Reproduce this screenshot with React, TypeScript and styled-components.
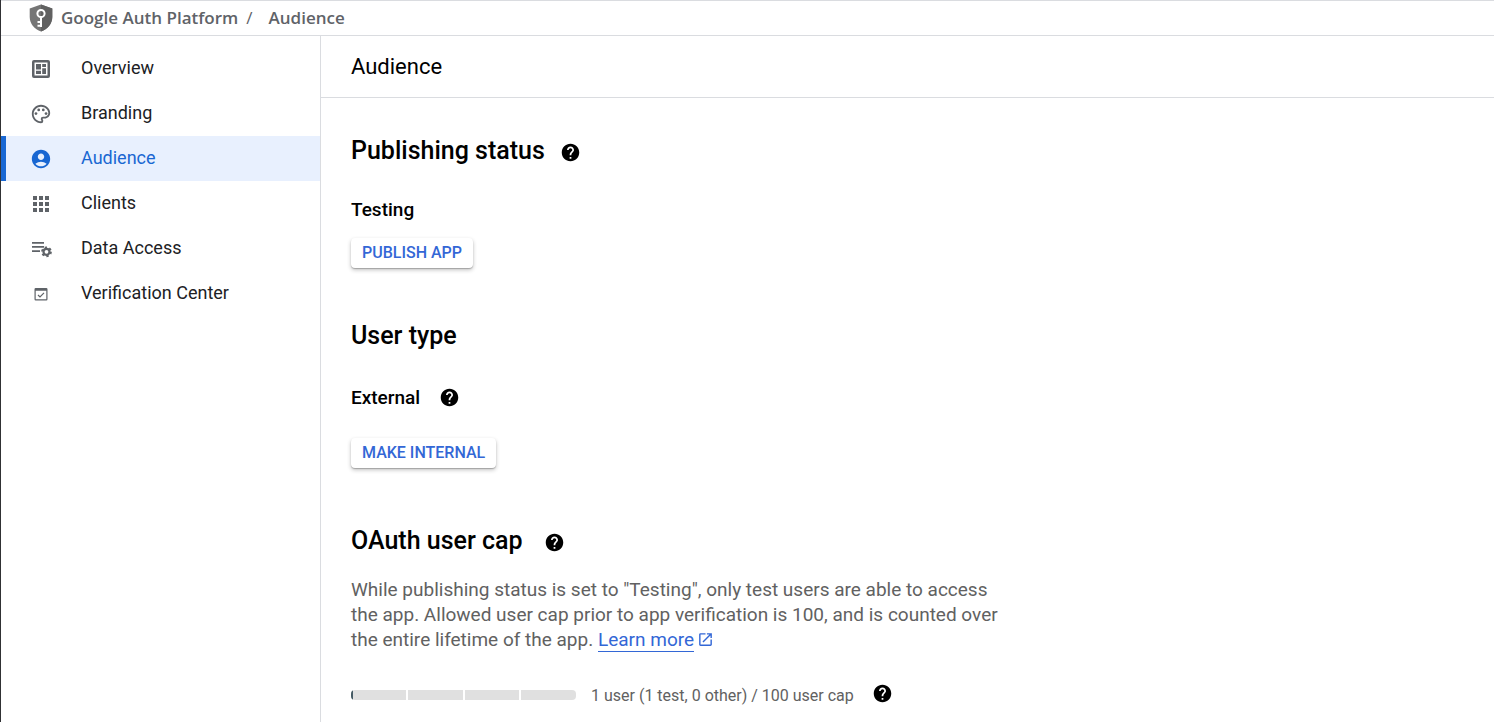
import React from "react";
import styled, { createGlobalStyle } from "styled-components";
import { MdAccountCircle, MdApps, MdHelp, MdOpenInNew, MdOutlinePalette } from "react-icons/md";

const GlobalStyle = createGlobalStyle`
  *, *::before, *::after { box-sizing: border-box; }
  body {
    margin: 0;
    background: #fff;
    color: #000;
    font-family: Roboto, "Liberation Sans", sans-serif;
  }
  h1, h2, h3, p, ul { margin: 0; padding: 0; }
`;

const Shell = styled.div`
  display: flex;
  flex-direction: column;
  min-height: 100vh;
  border-left: 1px solid #303134;
`;

const TopBar = styled.header`
  display: flex;
  align-items: center;
  height: 36px;
  padding-left: 28px;
  border-top: 1px solid #dadce0;
  border-bottom: 1px solid #dadce0;
`;

const Crumbs = styled.nav`
  display: flex;
  align-items: center;
  margin-left: 8px;
  font-family: "Open Sans", Roboto, sans-serif;
  font-size: 17px;
  font-weight: 600;
  line-height: 24px;
  color: #5f6368;
`;

const Crumb = styled.a`
  color: inherit;
  text-decoration: none;
`;

const Slash = styled.span`
  margin: 0 16px 0 8px;
  font-weight: 400;
`;

const Body = styled.div`
  display: flex;
  flex: 1;
`;

const Sidebar = styled.nav`
  flex: 0 0 320px;
  padding-top: 10px;
  border-right: 1px solid #dadce0;
`;

const NavList = styled.ul`
  list-style: none;
`;

const NavLink = styled.a<{ $active?: boolean }>`
  display: flex;
  align-items: center;
  gap: 28px;
  height: 45px;
  padding-left: 23px;
  border-left: 5px solid ${(p) => (p.$active ? "#1967d2" : "transparent")};
  background: ${(p) => (p.$active ? "#e8f0fe" : "transparent")};
  color: ${(p) => (p.$active ? "#1967d2" : "#202124")};
  font-size: 18px;
  line-height: 24px;
  text-decoration: none;
`;

const NavIcon = styled.span<{ $active?: boolean }>`
  display: flex;
  align-items: center;
  justify-content: center;
  width: 24px;
  height: 24px;
  color: ${(p) => (p.$active ? "#1967d2" : "#5f6368")};
`;

const NavText = styled.span`
  padding-bottom: 1px;
`;

const Main = styled.main`
  flex: 1;
  min-width: 0;
`;

const TitleBar = styled.div`
  height: 62px;
  padding: 16px 30px;
  border-bottom: 1px solid #dadce0;
`;

const Title = styled.h1`
  font-size: 22px;
  font-weight: 400;
  line-height: 30px;
`;

const Content = styled.div`
  padding: 38px 30px 12px;
`;

const Section = styled.section<{ $bottom?: number }>`
  display: flex;
  flex-direction: column;
  align-items: flex-start;
  margin-bottom: ${(p) => p.$bottom ?? 0}px;
`;

const HeadingRow = styled.div<{ $gap: number }>`
  display: flex;
  align-items: center;
  gap: ${(p) => p.$gap}px;
`;

const Heading = styled.h2`
  font-size: 25px;
  font-weight: 500;
  line-height: 30px;
`;

const Status = styled.h3`
  font-size: 19px;
  font-weight: 500;
  line-height: 20px;
`;

const StatusRow = styled.div<{ $top: number; $bottom: number }>`
  display: flex;
  align-items: center;
  gap: 19px;
  margin: ${(p) => p.$top}px 0 ${(p) => p.$bottom}px;
`;

const HelpButton = styled.button<{ $drop?: number; $lift?: number }>`
  display: flex;
  margin: 0;
  padding: ${(p) => p.$drop ?? 0}px 0 ${(p) => p.$lift ?? 0}px;
  border: 0;
  background: none;
  color: #000;
  cursor: pointer;
`;

const RaisedButton = styled.button`
  height: 30px;
  padding: 0 11px;
  border: 0;
  border-radius: 4px;
  background: #fff;
  box-shadow: 0 1px 1px rgba(0, 0, 0, 0.22), 0 2px 4px rgba(0, 0, 0, 0.24);
  color: #3367d6;
  font-family: inherit;
  font-size: 16px;
  font-weight: 500;
  line-height: 20px;
  cursor: pointer;
`;

const Description = styled.p`
  max-width: 650px;
  margin-top: 21px;
  color: #616161;
  font-size: 19px;
  line-height: 25px;

  svg {
    margin-left: 3px;
    color: #3367d6;
    vertical-align: -2px;
  }
`;

const LearnMore = styled.a`
  display: inline-block;
  border-bottom: 1px solid #3367d6;
  color: #3367d6;
  line-height: 22px;
  text-decoration: none;
`;

const CapRow = styled.div`
  display: flex;
  align-items: center;
  margin-top: 31px;
`;

const Meter = styled.div`
  display: grid;
  grid-template-columns: repeat(4, 1fr);
  gap: 2px;
  width: 225px;
  height: 10px;
  border-radius: 4px;
  overflow: hidden;
`;

const Quarter = styled.div`
  background: #e0e0e0;
`;

const Used = styled.div`
  width: 2px;
  height: 100%;
  background: #455a64;
`;

const CapText = styled.span`
  margin: 1px 18px 0 15px;
  color: #616161;
  font-size: 16px;
  line-height: 20px;
`;

const ShieldLogo = () => (
  <svg width="24" height="28" viewBox="0 0 24 28" aria-hidden="true">
    <path d="M12 0.5 23.3 4.6V13c0 6.600-4.800 12.300-11.300 14.500C5.500 25.300.700 19.600.700 13V4.600z" fill="#757575" />
    <path d="M12 .5 23.300 4.600V13c0 6.600-4.800 12.300-11.300 14.500z" fill="#616161" />
    <circle cx="12" cy="9.500" r="3.600" fill="none" stroke="#fff" strokeWidth="2" />
    <path d="M11 13h2v10h-2zM8.500 17h3v2h-3zM8.500 20.800h3v2h-3z" fill="#fff" />
  </svg>
);

const OverviewIcon = () => (
  <svg width="18" height="18" viewBox="0 0 18 18" aria-hidden="true">
    <path
      fill="currentColor"
      fillRule="evenodd"
      d="M2 0h14a2 2 0 0 1 2 2v14a2 2 0 0 1-2 2H2a2 2 0 0 1-2-2V2a2 2 0 0 1 2-2zM2.500 2.500v13h13v-13z"
    />
    <path fill="currentColor" d="M4 4h5v5.500H4zM10.200 4H14v3h-3.800zM4 10.700h5V14H4zM10.200 8.200H14V14h-3.800z" />
  </svg>
);

const DataAccessIcon = () => (
  <svg width="22" height="18" viewBox="-2 0 22 18" aria-hidden="true">
    <path fill="currentColor" d="M0 2h12v1.700H0zM0 6h12v1.700H0zM0 10.300h8V12H0z" />
    <g fill="none" stroke="currentColor">
      <circle cx="14.500" cy="11.800" r="3" strokeWidth="2.200" />
      <circle cx="14.500" cy="11.800" r="4.500" strokeWidth="1.800" strokeDasharray="2.300 2.412" />
    </g>
  </svg>
);

const VerificationIcon = () => (
  <svg width="14" height="14" viewBox="0 0 14 14" aria-hidden="true">
    <path
      fill="currentColor"
      fillRule="evenodd"
      d="M1.700 1h10.600A1.200 1.200 0 0 1 13.500 2.200v10.100a1.200 1.200 0 0 1-1.200 1.200H1.700A1.200 1.200 0 0 1 .5 12.300V2.200A1.200 1.200 0 0 1 1.700 1zM1.700 3.700v8.600h10.600V3.700z"
    />
    <path fill="none" stroke="currentColor" strokeWidth="1.200" d="M4 8 6 10 10 5.900" />
  </svg>
);

const navItems = [
  { label: "Overview", icon: <OverviewIcon /> },
  { label: "Branding", icon: <MdOutlinePalette size={22} /> },
  { label: "Audience", icon: <MdAccountCircle size={22} />, active: true },
  { label: "Clients", icon: <MdApps size={24} /> },
  { label: "Data Access", icon: <DataAccessIcon /> },
  { label: "Verification Center", icon: <VerificationIcon /> },
];

const Help = ({ topic, drop, lift }: { topic: string; drop?: number; lift?: number }) => (
  <HelpButton type="button" aria-label={`Help: ${topic}`} $drop={drop} $lift={lift}>
    <MdHelp size={21} />
  </HelpButton>
);

export default function App() {
  return (
    <>
      <GlobalStyle />
      <Shell>
        <TopBar>
          <ShieldLogo />
          <Crumbs aria-label="Breadcrumb">
            <Crumb href="#platform">Google Auth Platform</Crumb>
            <Slash>/</Slash>
            <Crumb href="#audience">Audience</Crumb>
          </Crumbs>
        </TopBar>
        <Body>
          <Sidebar aria-label="Sections">
            <NavList>
              {navItems.map((item) => (
                <li key={item.label}>
                  <NavLink href="#section" $active={item.active} aria-current={item.active ? "page" : undefined}>
                    <NavIcon $active={item.active}>{item.icon}</NavIcon>
                    <NavText>{item.label}</NavText>
                  </NavLink>
                </li>
              ))}
            </NavList>
          </Sidebar>
          <Main>
            <TitleBar>
              <Title>Audience</Title>
            </TitleBar>
            <Content>
              <Section $bottom={53}>
                <HeadingRow $gap={15}>
                  <Heading>Publishing status</Heading>
                  <Help topic="publishing status" drop={3} />
                </HeadingRow>
                <StatusRow $top={34} $bottom={18}>
                  <Status>Testing</Status>
                </StatusRow>
                <RaisedButton type="button">PUBLISH APP</RaisedButton>
              </Section>
              <Section $bottom={58}>
                <HeadingRow $gap={15}>
                  <Heading>User type</Heading>
                </HeadingRow>
                <StatusRow $top={36} $bottom={30}>
                  <Status>External</Status>
                  <Help topic="user type" />
                </StatusRow>
                <RaisedButton type="button">MAKE INTERNAL</RaisedButton>
              </Section>
              <Section>
                <HeadingRow $gap={21}>
                  <Heading>OAuth user cap</Heading>
                  <Help topic="OAuth user cap" drop={3} />
                </HeadingRow>
                <Description>
                  While publishing status is set to "Testing", only test users are able to access the app. Allowed
                  user cap prior to app verification is 100, and is counted over the entire lifetime of the app.{" "}
                  <LearnMore href="#learn-more">Learn more</LearnMore>
                  <MdOpenInNew size={17} />
                </Description>
                <CapRow>
                  <Meter role="meter" aria-label="Users" aria-valuenow={1} aria-valuemin={0} aria-valuemax={100}>
                    <Quarter>
                      <Used />
                    </Quarter>
                    <Quarter />
                    <Quarter />
                    <Quarter />
                  </Meter>
                  <CapText>1 user (1 test, 0 other) / 100 user cap</CapText>
                  <Help topic="user cap count" lift={3} />
                </CapRow>
              </Section>
            </Content>
          </Main>
        </Body>
      </Shell>
    </>
  );
}
